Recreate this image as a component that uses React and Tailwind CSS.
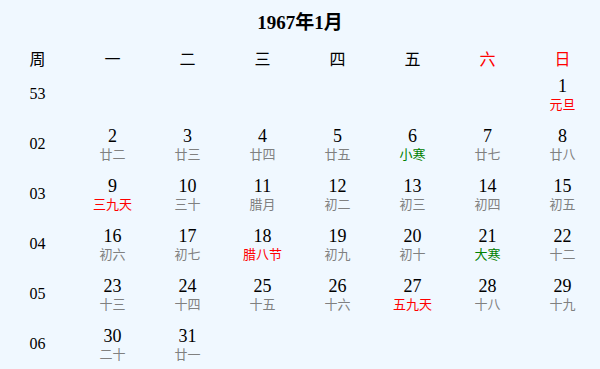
import React from "react";

const weekdays = [
  { label: "一" },
  { label: "二" },
  { label: "三" },
  { label: "四" },
  { label: "五" },
  { label: "六", red: true },
  { label: "日", red: true },
];

// kind: g = gray lunar day, r = red festival, t = green solar term
const weeks = [
  { no: "53", days: [null, null, null, null, null, null, ["1", "元旦", "r"]] },
  {
    no: "02",
    days: [
      ["2", "廿二", "g"],
      ["3", "廿三", "g"],
      ["4", "廿四", "g"],
      ["5", "廿五", "g"],
      ["6", "小寒", "t"],
      ["7", "廿七", "g"],
      ["8", "廿八", "g"],
    ],
  },
  {
    no: "03",
    days: [
      ["9", "三九天", "r"],
      ["10", "三十", "g"],
      ["11", "腊月", "g"],
      ["12", "初二", "g"],
      ["13", "初三", "g"],
      ["14", "初四", "g"],
      ["15", "初五", "g"],
    ],
  },
  {
    no: "04",
    days: [
      ["16", "初六", "g"],
      ["17", "初七", "g"],
      ["18", "腊八节", "r"],
      ["19", "初九", "g"],
      ["20", "初十", "g"],
      ["21", "大寒", "t"],
      ["22", "十二", "g"],
    ],
  },
  {
    no: "05",
    days: [
      ["23", "十三", "g"],
      ["24", "十四", "g"],
      ["25", "十五", "g"],
      ["26", "十六", "g"],
      ["27", "五九天", "r"],
      ["28", "十八", "g"],
      ["29", "十九", "g"],
    ],
  },
  {
    no: "06",
    days: [["30", "二十", "g"], ["31", "廿一", "g"], null, null, null, null, null],
  },
];

const lunarColor = {
  g: "text-[#808080]",
  r: "text-[#ff0000]",
  t: "text-[#008000]",
};

const DayCell = ({ day }) => {
  if (!day) return <div />;
  const [num, lunar, kind] = day;
  return (
    <div className="flex flex-col items-center justify-center">
      <span className="text-[18px] leading-[20px] text-black">{num}</span>
      <span className={`text-[13px] leading-[17px] ${lunarColor[kind]}`}>{lunar}</span>
    </div>
  );
};

export default function App() {
  return (
    <div
      className="w-[600px] h-[369px] overflow-hidden bg-[#f0f8ff] text-black"
      style={{ fontFamily: '"Liberation Serif", "Noto Sans CJK SC", serif' }}
    >
      <div className="h-[46px] flex items-center justify-center">
        <h1 className="text-[19px] font-bold">1967年1月</h1>
      </div>
      <div className="grid grid-cols-8 h-[23px] items-end text-[16px] leading-[19px]">
        <div className="text-center">周</div>
        {weekdays.map((w) => (
          <div key={w.label} className={`text-center ${w.red ? "text-[#ff0000]" : ""}`}>
            {w.label}
          </div>
        ))}
      </div>
      {weeks.map((wk) => (
        <div key={wk.no} className="grid grid-cols-8 h-[50px] items-center">
          <div className="text-center text-[16px]">{wk.no}</div>
          {wk.days.map((d, i) => (
            <DayCell key={i} day={d} />
          ))}
        </div>
      ))}
    </div>
  );
}
